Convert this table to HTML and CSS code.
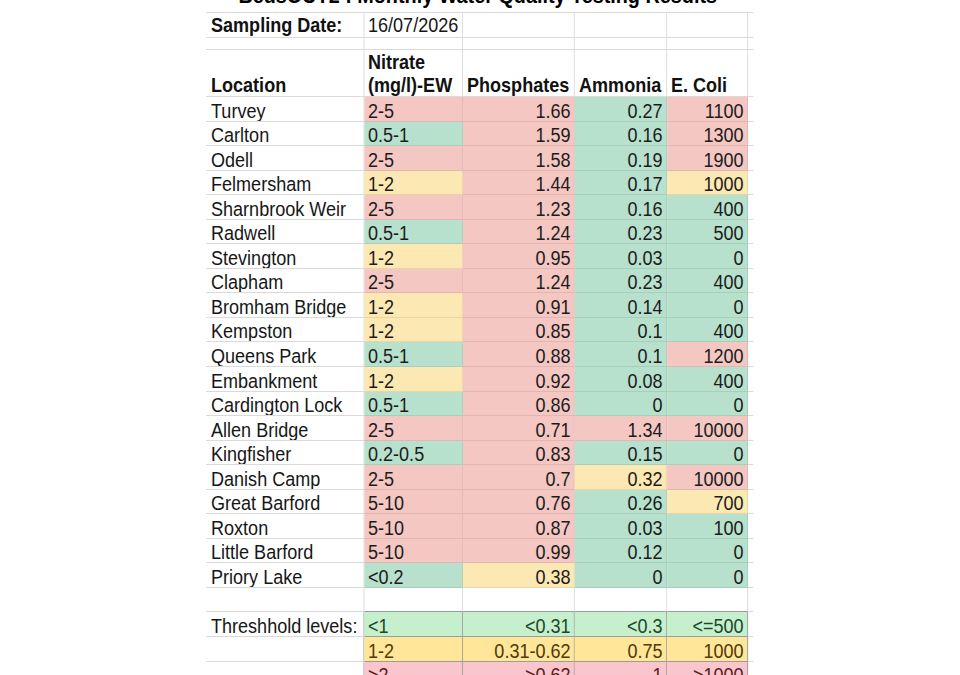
FILE: index.html
```html
<!DOCTYPE html>
<html lang="en">
<head>
<meta charset="utf-8">
<title>BedsOUT2 : Monthly Water Quality Testing Results</title>
<link rel="stylesheet" href="styles.css">
</head>
<body>
<main class="page">
  <div class="sheet">
    <table class="grid">
      <colgroup>
        <col class="c-loc"><col class="c-nit"><col class="c-pho"><col class="c-amm"><col class="c-eco"><col class="c-pad">
      </colgroup>
      <tbody>
        <tr class="title-row"><td colspan="5" class="title">BedsOUT2 : Monthly Water Quality Testing Results</td><td class="pad"></td></tr>
        <tr class="date-row"><td class="b">Sampling Date:</td><td>16/07/2026</td><td></td><td></td><td></td><td class="pad"></td></tr>
        <tr class="gap"><td></td><td></td><td></td><td></td><td></td><td class="pad"></td></tr>
        <tr class="head"><td class="b">Location</td><td class="b">Nitrate<br>(mg/l)-EW</td><td class="b">Phosphates</td><td class="b">Ammonia</td><td class="b">E. Coli</td><td class="pad"></td></tr>

        <tr class="row"><td>Turvey</td><td class="bad">2-5</td><td class="num bad">1.66</td><td class="num ok">0.27</td><td class="num bad">1100</td><td class="pad"></td></tr>
        <tr class="row"><td>Carlton</td><td class="ok">0.5-1</td><td class="num bad">1.59</td><td class="num ok">0.16</td><td class="num bad">1300</td><td class="pad"></td></tr>
        <tr class="row"><td>Odell</td><td class="bad">2-5</td><td class="num bad">1.58</td><td class="num ok">0.19</td><td class="num bad">1900</td><td class="pad"></td></tr>
        <tr class="row"><td>Felmersham</td><td class="warn">1-2</td><td class="num bad">1.44</td><td class="num ok">0.17</td><td class="num warn">1000</td><td class="pad"></td></tr>
        <tr class="row"><td>Sharnbrook Weir</td><td class="bad">2-5</td><td class="num bad">1.23</td><td class="num ok">0.16</td><td class="num ok">400</td><td class="pad"></td></tr>
        <tr class="row"><td>Radwell</td><td class="ok">0.5-1</td><td class="num bad">1.24</td><td class="num ok">0.23</td><td class="num ok">500</td><td class="pad"></td></tr>
        <tr class="row"><td>Stevington</td><td class="warn">1-2</td><td class="num bad">0.95</td><td class="num ok">0.03</td><td class="num ok">0</td><td class="pad"></td></tr>
        <tr class="row"><td>Clapham</td><td class="bad">2-5</td><td class="num bad">1.24</td><td class="num ok">0.23</td><td class="num ok">400</td><td class="pad"></td></tr>
        <tr class="row"><td>Bromham Bridge</td><td class="warn">1-2</td><td class="num bad">0.91</td><td class="num ok">0.14</td><td class="num ok">0</td><td class="pad"></td></tr>
        <tr class="row"><td>Kempston</td><td class="warn">1-2</td><td class="num bad">0.85</td><td class="num ok">0.1</td><td class="num ok">400</td><td class="pad"></td></tr>
        <tr class="row"><td>Queens Park</td><td class="ok">0.5-1</td><td class="num bad">0.88</td><td class="num ok">0.1</td><td class="num bad">1200</td><td class="pad"></td></tr>
        <tr class="row"><td>Embankment</td><td class="warn">1-2</td><td class="num bad">0.92</td><td class="num ok">0.08</td><td class="num ok">400</td><td class="pad"></td></tr>
        <tr class="row"><td>Cardington Lock</td><td class="ok">0.5-1</td><td class="num bad">0.86</td><td class="num ok">0</td><td class="num ok">0</td><td class="pad"></td></tr>
        <tr class="row"><td>Allen Bridge</td><td class="bad">2-5</td><td class="num bad">0.71</td><td class="num bad">1.34</td><td class="num bad">10000</td><td class="pad"></td></tr>
        <tr class="row"><td>Kingfisher</td><td class="ok">0.2-0.5</td><td class="num bad">0.83</td><td class="num ok">0.15</td><td class="num ok">0</td><td class="pad"></td></tr>
        <tr class="row"><td>Danish Camp</td><td class="bad">2-5</td><td class="num bad">0.7</td><td class="num warn">0.32</td><td class="num bad">10000</td><td class="pad"></td></tr>
        <tr class="row"><td>Great Barford</td><td class="bad">5-10</td><td class="num bad">0.76</td><td class="num ok">0.26</td><td class="num warn">700</td><td class="pad"></td></tr>
        <tr class="row"><td>Roxton</td><td class="bad">5-10</td><td class="num bad">0.87</td><td class="num ok">0.03</td><td class="num ok">100</td><td class="pad"></td></tr>
        <tr class="row"><td>Little Barford</td><td class="bad">5-10</td><td class="num bad">0.99</td><td class="num ok">0.12</td><td class="num ok">0</td><td class="pad"></td></tr>
        <tr class="row"><td>Priory Lake</td><td class="ok">&lt;0.2</td><td class="num warn">0.38</td><td class="num ok">0</td><td class="num ok">0</td><td class="pad"></td></tr>

        <tr class="row gap-before"><td></td><td></td><td></td><td></td><td></td><td class="pad"></td></tr>
        <tr class="row"><td class="th-label">Threshhold levels:</td><td class="t-ok">&lt;1</td><td class="num t-ok">&lt;0.31</td><td class="num t-ok">&lt;0.3</td><td class="num t-ok">&lt;=500</td><td class="pad"></td></tr>
        <tr class="row"><td class="th-label"></td><td class="t-warn">1-2</td><td class="num t-warn">0.31-0.62</td><td class="num t-warn">0.75</td><td class="num t-warn">1000</td><td class="pad"></td></tr>
        <tr class="row"><td class="th-label"></td><td class="t-bad">&gt;2</td><td class="num t-bad">&gt;0.62</td><td class="num t-bad">1</td><td class="num t-bad">&gt;1000</td><td class="pad"></td></tr>
      </tbody>
    </table>
  </div>
</main>
</body>
</html>
```

FILE: styles.css
```css
html, body {
  margin: 0;
  padding: 0;
  background: #ffffff;
  overflow: hidden;
}

body {
  font-family: "Liberation Sans", Arial, sans-serif;
  color: #161616;
}

.page {
  padding-left: 206px;
}

.sheet {
  width: 621.5px;
  margin-top: -15.8px;
  transform: scaleX(0.88);
  transform-origin: 0 0;
}

.grid {
  width: 621.5px;
  border-collapse: separate;
  border-spacing: 0;
  table-layout: fixed;
  font-size: 20.5px;
  line-height: 21px;
}

.c-loc { width: 179.5px; }
.c-nit { width: 112.5px; }
.c-pho { width: 127.3px; }
.c-amm { width: 104.5px; }
.c-eco { width: 92px; }
.c-pad { width: 5.7px; }

.grid td {
  box-sizing: border-box;
  padding: 0 4px 0 4.6px;
  border-right: 1px solid #dadada;
  border-bottom: 1px solid #dadada;
  vertical-align: bottom;
  white-space: nowrap;
  overflow: hidden;
}

.grid td:first-child {
  padding-left: 5.7px;
}

.grid td.pad {
  border-right: none;
  padding: 0;
}

.b {
  font-weight: bold;
  color: #111111;
}

.num {
  text-align: right;
}

/* title */
.title-row { height: 28.8px; }
.grid td.title {
  border-right: none;
  text-align: center;
  font-size: 22.5px;
  line-height: 24px;
  font-weight: bold;
  color: #000000;
  padding-bottom: 3.8px;
}

.date-row { height: 25px; }
.date-row td { padding-bottom: 2.3px; }

.gap { height: 12px; }

.head { height: 47px; }
.head td {
  line-height: 22.5px;
  padding-bottom: 0;
}

.row { height: 24.55px; }

/* conditional colours */
.grid td.bad,
.grid td.ok,
.grid td.warn {
  border-color: rgba(0, 0, 0, 0.08);
  color: #1c1c1c;
}
.bad { background: #f4c7c3; }
.ok { background: #b7e1cd; }
.warn { background: #fce8b2; }

/* threshold legend */
.gap-before td:not(:first-child):not(.pad) {
  border-bottom-color: #9c9c9c;
}
.grid td.th-label {
  border-right-color: #9c9c9c;
}
.grid td.t-ok,
.grid td.t-warn,
.grid td.t-bad {
  border-color: #9c9c9c;
}
.t-ok { background: #c6efce; color: #21472b; }
.t-warn { background: #ffe699; color: #4f3b06; }
.t-bad { background: #f8c6cc; color: #5a1c22; }
```
